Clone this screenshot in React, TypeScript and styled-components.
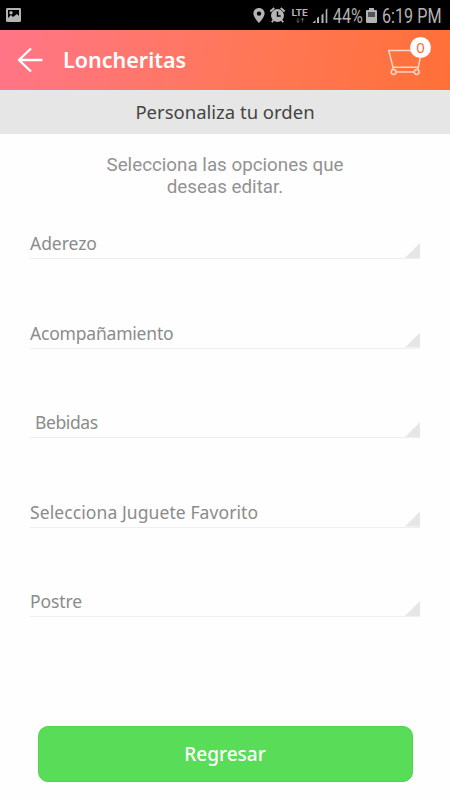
import React from "react";
import styled, { createGlobalStyle } from "styled-components";

const GlobalStyle = createGlobalStyle`
  * { box-sizing: border-box; }
  body { margin: 0; background: #fefefe; }
`;

const Screen = styled.div`
  width: 450px;
  height: 800px;
  display: flex;
  flex-direction: column;
  overflow: hidden;
  background: #fefefe;
  font-family: "Noto Sans", "Open Sans", sans-serif;
`;

const StatusBar = styled.div`
  height: 30px;
  flex: none;
  display: flex;
  justify-content: space-between;
  background: #000;
`;

const StatusIcons = styled.svg`
  display: block;
  height: 30px;
  overflow: visible;
`;

const StatusText = styled.text`
  font-family: Roboto, sans-serif;
  fill: #b4b4b4;
`;

const AppBar = styled.header`
  height: 60px;
  flex: none;
  display: flex;
  align-items: center;
  padding: 0 16px 0 17px;
  background: linear-gradient(100deg, #ff7588 0%, #ff7755 58%, #ff7038 100%);
`;

const BackButton = styled.button`
  width: 46px;
  height: 60px;
  padding: 0;
  border: 0;
  background: none;
  svg { display: block; }
`;

const Title = styled.h1`
  flex: 1;
  margin: 0;
  font-size: 21.5px;
  line-height: 60px;
  font-weight: 600;
  color: #fff;
`;

const CartButton = styled.button`
  position: relative;
  width: 48px;
  height: 60px;
  padding: 0;
  border: 0;
  background: none;
  svg { display: block; }
`;

const Badge = styled.span`
  position: absolute;
  top: 7px;
  left: 24px;
  width: 21px;
  height: 21px;
  border-radius: 50%;
  background: #fff;
  color: #ff6c3c;
  font: 400 15px/21px "Noto Sans", sans-serif;
  text-align: center;
`;

const SectionHeading = styled.h2`
  height: 44px;
  flex: none;
  margin: 0;
  border-top: 1px solid #dfeaec;
  background: #e6e6e6;
  color: #444;
  font-size: 18.5px;
  line-height: 41px;
  font-weight: 400;
  text-align: center;
`;

const Hint = styled.p`
  margin: 20px auto 0;
  width: 270px;
  flex: none;
  font: 400 18.8px/22px Roboto, sans-serif;
  color: #929292;
  text-align: center;
`;

const OptionList = styled.div`
  flex: none;
  display: flex;
  flex-direction: column;
  gap: 49.5px;
  margin: 21px 30px 0;
`;

const Option = styled.div<{ $indent?: number }>`
  height: 40px;
  padding-left: ${({ $indent = 0 }) => $indent}px;
  display: flex;
  align-items: flex-end;
  justify-content: space-between;
  border-bottom: 1px solid #efefef;
`;

const OptionLabel = styled.span<{ $tracking: number }>`
  color: #8b8b8b;
  font-size: 17.5px;
  line-height: 30px;
  letter-spacing: ${({ $tracking }) => $tracking}px;
  white-space: nowrap;
`;

const Corner = styled.span`
  width: 15px;
  height: 15px;
  background: #e6e6e6;
  clip-path: polygon(100% 0, 100% 100%, 0 100%);
`;

const SubmitButton = styled.button`
  width: 375px;
  height: 56px;
  flex: none;
  margin: auto auto 18px;
  padding: 0;
  border: 1px solid #4fd64c;
  border-radius: 10px;
  background: #59dc57;
  color: #fff;
  font: 500 19px/54px "Noto Sans", sans-serif;
`;

const options = [
  { label: "Aderezo", tracking: -0.05 },
  { label: "Acompañamiento", tracking: -0.2 },
  { label: "Bebidas", tracking: -0.4, indent: 5 },
  { label: "Selecciona Juguete Favorito", tracking: 0.09 },
  { label: "Postre", tracking: -0.1 },
];

export default function App() {
  return (
    <Screen>
      <GlobalStyle />
      <StatusBar>
        <StatusIcons width="30" viewBox="0 0 30 30">
          <path fill="#b4b4b4" fillRule="evenodd" d="M7.500 8h12.200q1.300 0 1.300 1.300v11.400q0 1.300-1.300 1.300H7.500Q6 22 6 20.700V9.300Q6 8 7.500 8ZM8 10v8l3-3 2 2 4-3 2 2v-6Z" />
          <circle cx="11" cy="12.700" r="1.700" fill="#b4b4b4" />
        </StatusIcons>
        <StatusIcons width="210" viewBox="240 0 210 30">
          <g fill="#b4b4b4">
            <path fillRule="evenodd" d="M259 8c-3.200 0-5.600 2.400-5.600 5.500 0 3.800 5.600 9.500 5.600 9.500s5.600-5.700 5.600-9.500C264.600 10.400 262.200 8 259 8Zm0 3.400a2.200 2.200 0 1 1 0 4.400a2.200 2.200 0 0 1 0-4.400Z" />
            <circle cx="277.500" cy="15.500" r="6.500" />
            <path d="m270.300 11.500 4-3.500M284.700 11.500l-4-3.500" stroke="#b4b4b4" strokeWidth="2" />
            <path d="m273.500 20-1.700 2.200M281.500 20l1.700 2.200" stroke="#b4b4b4" strokeWidth="1.800" />
          </g>
          <path d="M277.500 11.500v4.500h3.200" fill="none" stroke="#000" strokeWidth="1.500" />
          <StatusText transform="translate(291.500 16) scale(1.03 1)" fontSize="9.800" fontWeight="700">LTE</StatusText>
          <path d="M298 18v4.500M296.300 20.500l1.700 2 1.700-2M302.500 22.500V18M300.800 20l1.700-2 1.700 2" stroke="#555" fill="none" />
          <path d="M312.500 23h3v-3ZM317 23v-5l2-1.500V23ZM321.500 23v-8l2-1.500V23ZM325.700 23V10l1.600-1.800V23Z" fill="#b4b4b4" />
          <StatusText transform="translate(332.800 23) scale(.83 1)" fontSize="19.500">44%</StatusText>
          <path d="M369 8h5v2h2q1 0 1 1v11q0 1-1 1h-9q-1 0-1-1V11q0-1 1-1h2Z" fill="#b4b4b4" />
          <path d="M368 12h7v5h-7Z" fill="#555" />
          <StatusText transform="translate(382 23) scale(.83 1)" fontSize="19.500">6:19 PM</StatusText>
        </StatusIcons>
      </StatusBar>
      <AppBar>
        <BackButton aria-label="Volver">
          <svg width="28" height="60" viewBox="17 30 28 60" fill="none" stroke="#fff" strokeWidth="2.300">
            <path d="M42.500 60H19M31 48.500 19 60l12 11.500" />
          </svg>
        </BackButton>
        <Title>Loncheritas</Title>
        <CartButton aria-label="Carrito">
          <svg width="48" height="60" viewBox="386 30 48 60" fill="none" stroke="#ffd5c5" strokeWidth="1.500">
            <path d="M421 50.500h-32.300l4.300 16.800h25.300L421 54M393 67v5M418.300 67l-1.300 5M396 72h18" />
            <circle cx="393.600" cy="72" r="2.400" fill="#ff7440" />
            <circle cx="416.700" cy="72" r="2.400" fill="#ff7440" />
          </svg>
          <Badge>0</Badge>
        </CartButton>
      </AppBar>
      <SectionHeading>Personaliza tu orden</SectionHeading>
      <Hint>Selecciona las opciones que<br />deseas editar.</Hint>
      <OptionList>
        {options.map(({ label, tracking, indent }) => (
          <Option key={label} $indent={indent}>
            <OptionLabel $tracking={tracking}>{label}</OptionLabel>
            <Corner />
          </Option>
        ))}
      </OptionList>
      <SubmitButton>Regresar</SubmitButton>
    </Screen>
  );
}
